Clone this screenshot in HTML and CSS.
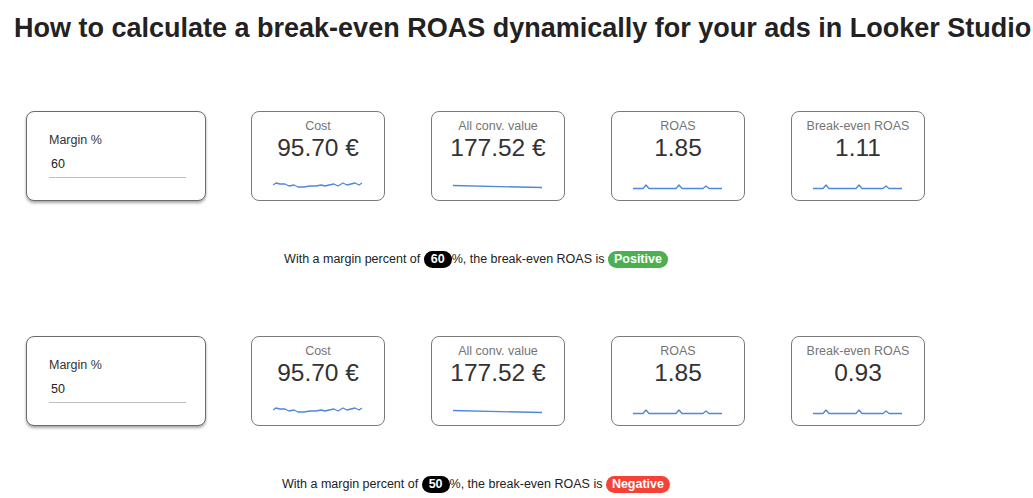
FILE: index.html
```html
<!DOCTYPE html>
<html lang="en">
<head>
<meta charset="utf-8">
<title>Break-even ROAS</title>
<link rel="stylesheet" href="styles.css">
</head>
<body>
<h1 class="title">How to calculate a break-even ROAS dynamically for your ads in Looker Studio</h1>

<section class="block">
  <div class="cards">
    <div class="input-card">
      <div class="input-label">Margin %</div>
      <div class="input-field">60</div>
    </div>
    <div class="stat">
      <div class="stat-label">Cost</div>
      <div class="stat-value">95.70 €</div>
      <svg class="spark" viewBox="0 0 90 14" width="90" height="14"><polyline points="0,9 3,7 7,8 12,8 16,10 21,9 25,11 31,11 37,10 43,10 48,9 52,10 56,9 61,8 65,10 70,7 74,9 78,8 82,7 86,9 89,7"/></svg>
    </div>
    <div class="stat">
      <div class="stat-label">All conv. value</div>
      <div class="stat-value">177.52 €</div>
      <svg class="spark" viewBox="0 0 90 14" width="90" height="14"><polyline points="0,9.5 89,11.5"/></svg>
    </div>
    <div class="stat">
      <div class="stat-label">ROAS</div>
      <div class="stat-value">1.85</div>
      <svg class="spark" viewBox="0 0 90 14" width="90" height="14"><polyline points="0,12.5 10,12.5 13,9 16,12.5 43,12.5 46,9 49,12.5 70,12.5 73,10 76,12.5 89,12.5"/></svg>
    </div>
    <div class="stat">
      <div class="stat-label">Break-even ROAS</div>
      <div class="stat-value">1.11</div>
      <svg class="spark" viewBox="0 0 90 14" width="90" height="14"><polyline points="0,12.5 10,12.5 13,9 16,12.5 43,12.5 46,9 49,12.5 70,12.5 73,10 76,12.5 89,12.5"/></svg>
    </div>
  </div>
  <p class="sentence">With a margin percent of <span class="pill pill-dark">60</span>%, the break-even ROAS is <span class="pill pill-pos">Positive</span></p>
</section>

<section class="block">
  <div class="cards">
    <div class="input-card">
      <div class="input-label">Margin %</div>
      <div class="input-field">50</div>
    </div>
    <div class="stat">
      <div class="stat-label">Cost</div>
      <div class="stat-value">95.70 €</div>
      <svg class="spark" viewBox="0 0 90 14" width="90" height="14"><polyline points="0,9 3,7 7,8 12,8 16,10 21,9 25,11 31,11 37,10 43,10 48,9 52,10 56,9 61,8 65,10 70,7 74,9 78,8 82,7 86,9 89,7"/></svg>
    </div>
    <div class="stat">
      <div class="stat-label">All conv. value</div>
      <div class="stat-value">177.52 €</div>
      <svg class="spark" viewBox="0 0 90 14" width="90" height="14"><polyline points="0,9.5 89,11.5"/></svg>
    </div>
    <div class="stat">
      <div class="stat-label">ROAS</div>
      <div class="stat-value">1.85</div>
      <svg class="spark" viewBox="0 0 90 14" width="90" height="14"><polyline points="0,12.5 10,12.5 13,9 16,12.5 43,12.5 46,9 49,12.5 70,12.5 73,10 76,12.5 89,12.5"/></svg>
    </div>
    <div class="stat">
      <div class="stat-label">Break-even ROAS</div>
      <div class="stat-value">0.93</div>
      <svg class="spark" viewBox="0 0 90 14" width="90" height="14"><polyline points="0,12.5 10,12.5 13,9 16,12.5 43,12.5 46,9 49,12.5 70,12.5 73,10 76,12.5 89,12.5"/></svg>
    </div>
  </div>
  <p class="sentence">With a margin percent of <span class="pill pill-dark">50</span>%, the break-even ROAS is <span class="pill pill-neg">Negative</span></p>
</section>
</body>
</html>
```

FILE: styles.css
```css
html, body {
  margin: 0;
  padding: 0;
  background: #ffffff;
}

body {
  font-family: "Liberation Sans", Arial, sans-serif;
  color: #333333;
  overflow: hidden;
}

.title {
  margin: 0;
  padding: 13px 0 0 14px;
  font-size: 27px;
  line-height: 30px;
  font-weight: 700;
  color: #222222;
  white-space: nowrap;
}

.block {
  width: 900px;
  padding-left: 26px;
}

.block:first-of-type {
  margin-top: 68px;
}

.block + .block {
  margin-top: 68px;
}

.cards {
  display: flex;
  align-items: flex-start;
  gap: 46px;
}

.input-card {
  box-sizing: border-box;
  width: 180px;
  height: 90px;
  margin-right: -1px;
  border: 1px solid #6b6b6b;
  border-radius: 8px;
  box-shadow: 0 2px 3px rgba(0, 0, 0, 0.35);
  padding: 20px 19px 0 22px;
  background: #fff;
}

.input-label {
  font-size: 12.5px;
  line-height: 16px;
  color: #333;
}

.input-field {
  margin-top: 8px;
  padding: 0 0 5px 2px;
  border-bottom: 1px solid #bdbdbd;
  font-size: 12.5px;
  line-height: 16px;
  color: #222;
}

.stat {
  box-sizing: border-box;
  width: 134px;
  height: 90px;
  border: 1px solid #7a7a7a;
  border-radius: 8px;
  padding-top: 6px;
  display: flex;
  flex-direction: column;
  align-items: center;
  background: #fff;
}

.stat-label {
  font-size: 12.5px;
  line-height: 16px;
  color: #757575;
  white-space: nowrap;
}

.stat-value {
  font-size: 24.5px;
  line-height: 28px;
  color: #333;
  white-space: nowrap;
}

.spark {
  margin-top: 14px;
  display: block;
}

.spark polyline {
  fill: none;
  stroke: #4f86e0;
  stroke-width: 1.3;
  stroke-linejoin: round;
}

.sentence {
  margin: 49px 0 0;
  font-size: 12.5px;
  line-height: 18px;
  text-align: center;
  color: #222;
}

.pill {
  display: inline-block;
  font-weight: 700;
  color: #fff;
  border-radius: 9px;
  line-height: 17px;
  padding: 0 6px;
}

.pill-dark {
  background: #000;
  padding: 0 7px;
}

.pill-pos {
  background: #4caf50;
}

.pill-neg {
  background: #f44336;
}
```
